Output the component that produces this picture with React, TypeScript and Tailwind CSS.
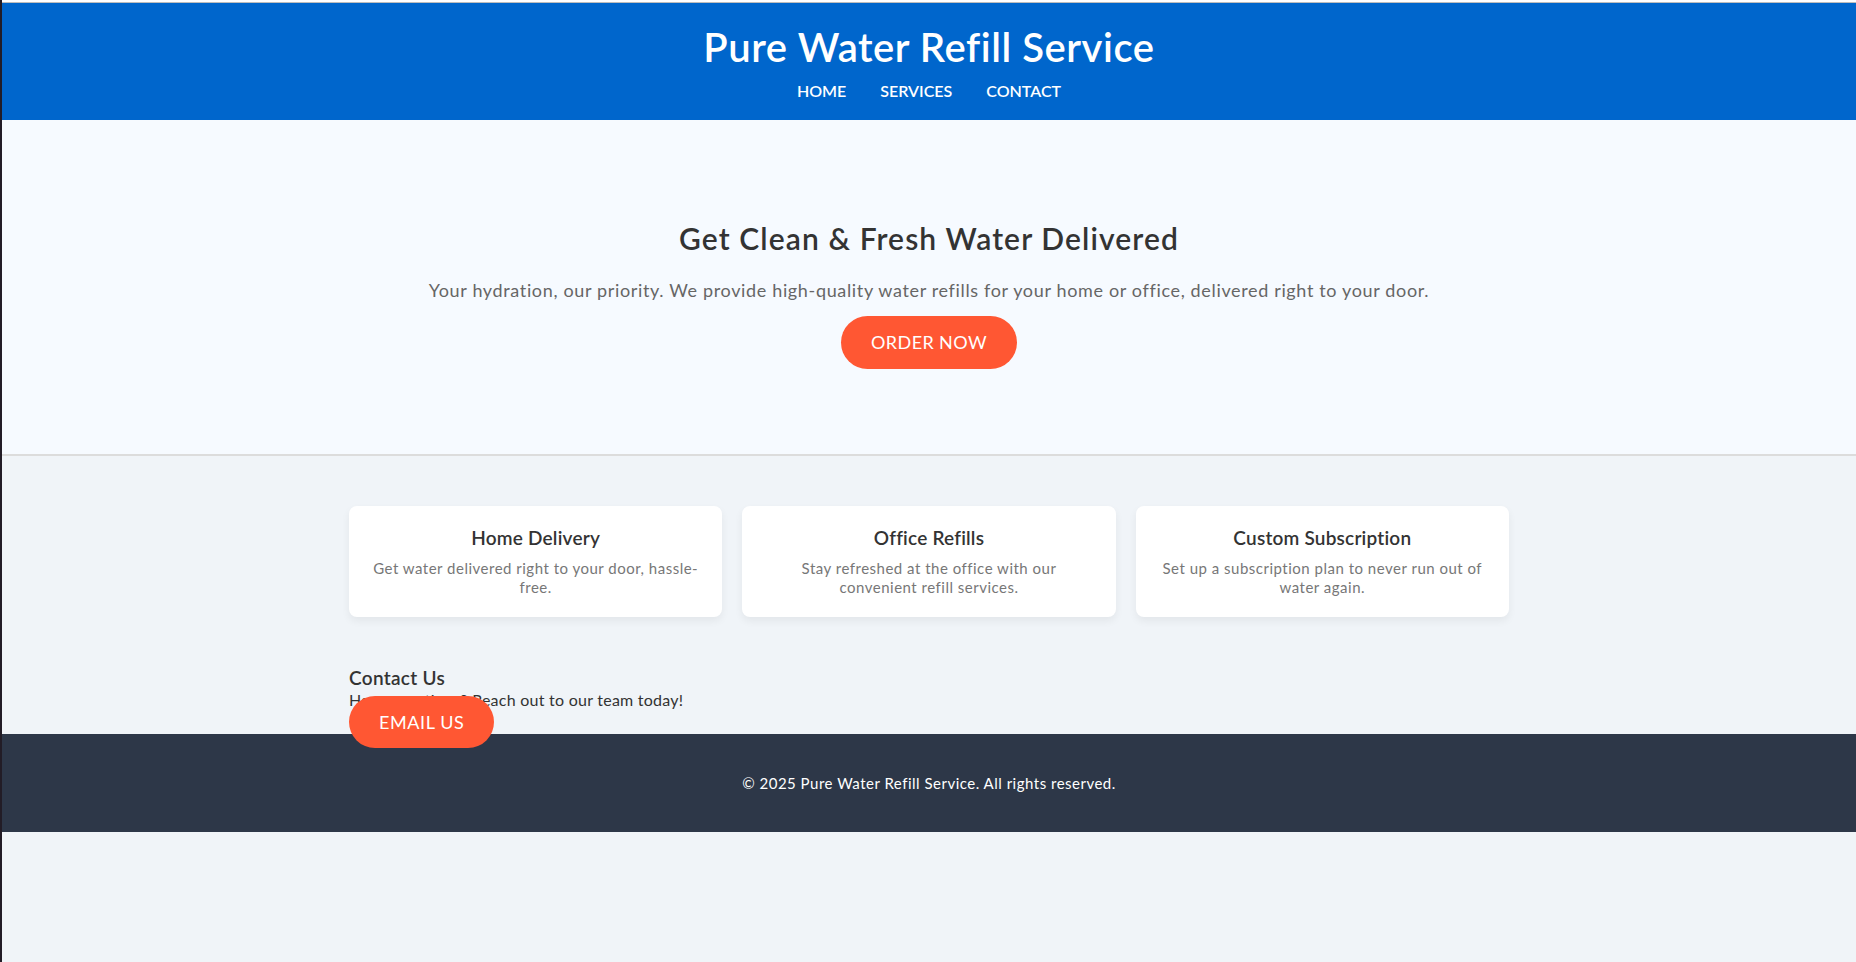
import React from "react";

export default function App() {
  return (
    <div
      className="min-h-screen bg-[#f0f4f8] border-l-2 border-[#221c26] text-[#333333]"
      style={{ fontFamily: "Lato, 'Noto Sans', sans-serif" }}
    >
      <div className="h-[2px] bg-white" />
      <div className="h-[1px] bg-[#bdbdbd]" />
      <header className="bg-[#0066cc] text-white pt-[20px] pb-[20px] text-center">
        <h1 className="text-[40px] leading-[48px] font-semibold tracking-[0.55px]">Pure Water Refill Service</h1>
        <nav className="mt-[10px] flex justify-center gap-[34px] text-[16px] leading-[19px] font-semibold">
          <a href="#home">HOME</a>
          <a href="#services">SERVICES</a>
          <a href="#contact">CONTACT</a>
        </nav>
      </header>

      <section className="bg-[#f6faff] pt-[100px] pb-[85px] border-b-2 border-[#dcdcdc] text-center">
        <h2 className="text-[30px] leading-[36px] font-semibold text-[#333333] tracking-[1.1px]">
          Get Clean &amp; Fresh Water Delivered
        </h2>
        <p className="mt-[20px] text-[18px] leading-[28px] text-[#666666] tracking-[0.65px]">
          Your hydration, our priority. We provide high-quality water refills for your home or office, delivered right to your door.
        </p>
        <a
          href="#order"
          className="mt-[12px] inline-block bg-[#ff5733] text-white text-[18px] leading-[23px] px-[30px] py-[15px] rounded-full tracking-[0.4px]"
        >
          ORDER NOW
        </a>
      </section>

      <section className="pt-[50px] pb-[50px]">
        <div className="max-w-[1160px] mx-auto grid grid-cols-3 gap-[20px]">
          {[
            ["Home Delivery", "Get water delivered right to your door, hassle-free."],
            ["Office Refills", "Stay refreshed at the office with our convenient refill services."],
            ["Custom Subscription", "Set up a subscription plan to never run out of water again."],
          ].map(([t, d]) => (
            <div
              key={t}
              className="bg-white rounded-[8px] p-[20px] text-center shadow-[0_4px_8px_rgba(0,0,0,0.06)]"
            >
              <h3 className="text-[19px] leading-[23px] font-semibold text-[#333333] tracking-[0.2px]">{t}</h3>
              <p className="mt-[10px] text-[15px] leading-[19px] text-[#777777] tracking-[0.5px]">{d}</p>
            </div>
          ))}
        </div>
      </section>

      <section className="max-w-[1160px] mx-auto">
        <h3 className="text-[19px] leading-[22px] font-semibold text-[#333333] tracking-[0.3px]">Contact Us</h3>
        <p className="text-[16px] leading-[22px] text-[#333333] tracking-[0.25px]">Have questions? Reach out to our team today!</p>
        <div className="leading-[22px]">
          <a
            href="#email"
            className="bg-[#ff5733] text-white text-[18px] px-[30px] py-[15px] rounded-[30px] tracking-[0.6px]"
          >
            EMAIL US
          </a>
        </div>
      </section>

      <footer className="bg-[#2d3748] text-white text-center py-[39px] text-[15px] leading-[20px] tracking-[0.5px]">
        © 2025 Pure Water Refill Service. All rights reserved.
      </footer>
    </div>
  );
}
